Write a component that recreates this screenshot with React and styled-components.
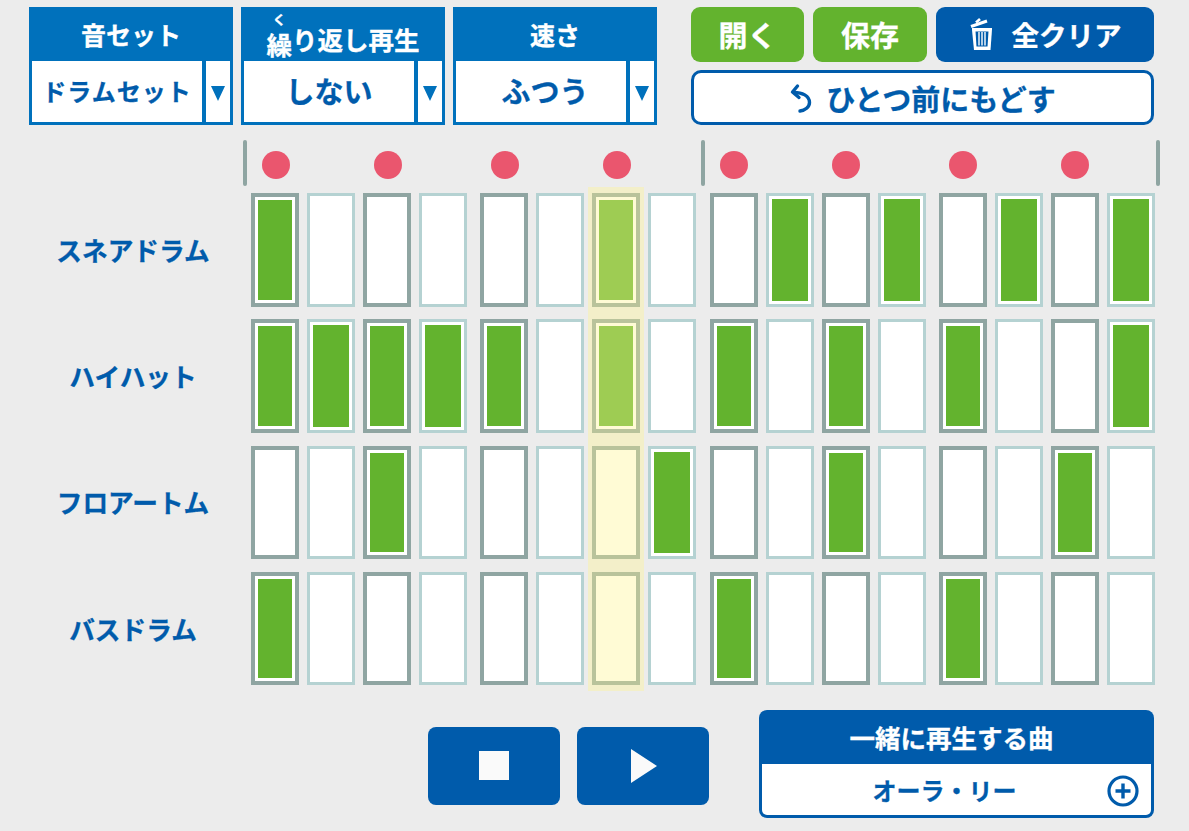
import React from "react";
import styled, { createGlobalStyle } from "styled-components";

const Global = createGlobalStyle`
  html, body { margin: 0; padding: 0; background: #ececec; }
  body {
    font-family: "Noto Sans CJK JP", "Noto Sans", sans-serif;
    font-weight: 700;
    -webkit-text-stroke: 0.3px currentColor;
  }
  * { box-sizing: border-box; }
`;

const Page = styled.div`
  position: relative;
  width: 1189px;
  height: 831px;
  padding: 7px 0 0 29px;
  overflow: hidden;
`;

const TopBar = styled.div`
  display: flex;
  gap: 8px;
  height: 118px;
`;

const SelectPanel = styled.div`
  width: 204px;
  height: 118px;
  display: flex;
  flex-direction: column;
  background: #0071bc;
  padding: 0 3px 3px;
`;

const SelectTitle = styled.div`
  height: 54px;
  display: flex;
  align-items: center;
  justify-content: center;
  color: #fff;
  font-size: ${(p) => (p.$ruby ? 25.5 : 25)}px;
  line-height: 30px;
  white-space: nowrap;
  padding-top: ${(p) => (p.$ruby ? "9px" : "0")};
  rt {
    font-size: 13px;
    line-height: 13px;
    position: relative;
    top: -6px;
  }
`;

const SelectBody = styled.div`
  flex: 1;
  display: flex;
  gap: 4px;
`;

const SelectValue = styled.div`
  width: 170px;
  background: #fff;
  color: #005bab;
  font-size: ${(p) => p.$size || 29}px;
  letter-spacing: ${(p) => p.$spacing || 0}px;
  padding: 0 0 3px ${(p) => p.$shift || 0}px;
  display: flex;
  align-items: center;
  justify-content: center;
  white-space: nowrap;
`;

const SelectArrow = styled.div`
  width: 24px;
  background: #fff;
  display: flex;
  align-items: center;
  justify-content: center;
  padding-top: 4px;
  &::after {
    content: "";
    border-left: 7px solid transparent;
    border-right: 7px solid transparent;
    border-top: 15px solid #0071bc;
  }
`;

const ActionGroup = styled.div`
  width: 463px;
  margin-left: 26px;
  display: flex;
  flex-direction: column;
  gap: 8px;
`;

const ActionRow = styled.div`
  display: flex;
  gap: 9px;
`;

const ActionButton = styled.div`
  width: ${(p) => p.$w}px;
  height: 55px;
  border-radius: 9px;
  background: ${(p) => (p.$blue ? "#005bab" : "#63b32e")};
  color: #fff;
  font-size: ${(p) => (p.$blue ? 27.5 : 29)}px;
  padding-bottom: 2px;
  display: flex;
  align-items: center;
  justify-content: center;
  gap: ${(p) => (p.$blue ? "17px" : "0")};
  white-space: nowrap;
`;

const UndoButton = styled.div`
  height: 55px;
  border-radius: 10px;
  border: 3px solid #005bab;
  background: #fff;
  color: #005bab;
  font-size: 29px;
  display: flex;
  align-items: center;
  justify-content: center;
  gap: 13px;
  white-space: nowrap;
`;

const BeatRow = styled.div`
  display: flex;
  height: 46px;
  margin: 15px 0 7px 214px;
  width: 917px;
`;

const Bar = styled.div`
  width: 4px;
  height: 46px;
  border-radius: 2px;
  background: #8fa5a2;
  margin-left: ${(p) => p.$ml || 0}px;
`;

const Dot = styled.div`
  width: 28px;
  height: 28px;
  margin: 11px 0 0 ${(p) => p.$ml}px;
  border-radius: 50%;
  background: #ea566e;
`;

const Grid = styled.div`
  display: flex;
  flex-direction: column;
  gap: 12.83px;
`;

const Track = styled.div`
  display: flex;
  height: 113.5px;
`;

const TrackLabel = styled.div`
  width: 208px;
  margin-right: 14px;
  padding-bottom: 1px;
  display: flex;
  align-items: center;
  justify-content: center;
  color: #005bab;
  font-size: 25.7px;
  white-space: nowrap;
`;

const Measure = styled.div`
  display: flex;
  gap: 8.5px;
  margin-left: ${(p) => p.$ml || 0}px;
`;

const Cell = styled.div`
  width: 47.5px;
  height: 113.5px;
  background: #fff;
  border: ${(p) => (p.$beat ? "4px solid #8fa5a2" : "3px solid #b5d2d2")};
  padding: 3px;
  &::after {
    content: "";
    display: ${(p) => (p.$on ? "block" : "none")};
    width: 100%;
    height: 100%;
    background: #63b32e;
  }
`;

const Playhead = styled.div`
  position: absolute;
  left: 588px;
  top: 187px;
  width: 56px;
  height: 504px;
  background: rgba(255, 245, 145, 0.38);
  pointer-events: none;
`;

const Transport = styled.div`
  display: flex;
  margin: 24.5px 0 0 399px;
`;

const TransportButton = styled.div`
  width: 132px;
  height: 78px;
  margin: 17px 17px 0 0;
  border-radius: 8px;
  background: #005bab;
  display: flex;
  align-items: center;
  justify-content: center;
`;

const StopGlyph = styled.div`
  width: 30px;
  height: 29px;
  background: #fafafa;
`;

const PlayIcon = styled.svg`
  margin-left: 2px;
`;

const SongPanel = styled.div`
  width: 395px;
  height: 108px;
  margin-left: 33px;
  border-radius: 8px;
  background: #005bab;
  padding: 0 3px 3px;
  display: flex;
  flex-direction: column;
`;

const SongTitle = styled.div`
  height: 54px;
  display: flex;
  align-items: center;
  justify-content: center;
  color: #fff;
  font-size: 25.5px;
  padding-right: 10px;
  white-space: nowrap;
`;

const SongBody = styled.div`
  position: relative;
  flex: 1;
  background: #fff;
  border-radius: 0 0 5px 5px;
  color: #005bab;
  font-size: 24px;
  display: flex;
  align-items: center;
  justify-content: center;
  padding-right: 24px;
`;

const PlusIcon = styled.svg`
  position: absolute;
  right: 12px;
  top: 11px;
`;

const TrashIcon = () => (
  <svg width="26" height="34" viewBox="0 0 26 34" fill="none">
    <path d="M2 9.5 L18 4" stroke="#fff" strokeWidth="3" />
    <path d="M7 5.5 L11 2" stroke="#fff" strokeWidth="2.6" />
    <path d="M3 11 H23 V12.5 L21.5 33 H5 L3 13 Z" fill="#fff" />
    <path d="M6.5 14.5 H19.5 L18.5 29.5 H7.5 Z" fill="#005bab" />
    <path d="M10 15 V28.5 M13 15 V28.5 M16 15 V28.5" stroke="#fff" strokeWidth="1.4" />
  </svg>
);

const UndoIcon = () => (
  <svg width="24" height="30" viewBox="0 0 24 30" fill="none">
    <path d="M8.5 3 L3.5 9 L10 14.5" stroke="#005bab" strokeWidth="3.4" strokeLinecap="round" strokeLinejoin="round" />
    <path d="M5 9.5 C13 9.5 20.5 12.5 20.5 19.5 C20.5 24 16 27.5 11 28" stroke="#005bab" strokeWidth="3.4" strokeLinecap="round" />
  </svg>
);

const rows = [
  { name: "スネアドラム", on: [0, 6, 9, 11, 13, 15] },
  { name: "ハイハット", on: [0, 1, 2, 3, 4, 6, 8, 10, 12, 15] },
  { name: "フロアートム", on: [2, 7, 10, 14] },
  { name: "バスドラム", on: [0, 8, 12] },
];

const measures = [
  { start: 0, ml: 0 },
  { start: 4, ml: 13.5 },
  { start: 8, ml: 14.5 },
  { start: 12, ml: 13.5 },
];

export default function App() {
  return (
    <Page>
      <Global />
      <TopBar>
        <SelectPanel>
          <SelectTitle>音セット</SelectTitle>
          <SelectBody>
            <SelectValue $size={24} $spacing={1}>ドラムセット</SelectValue>
            <SelectArrow />
          </SelectBody>
        </SelectPanel>
        <SelectPanel>
          <SelectTitle $ruby>
            <ruby>繰<rt>く</rt></ruby>り返し再生
          </SelectTitle>
          <SelectBody>
            <SelectValue>しない</SelectValue>
            <SelectArrow />
          </SelectBody>
        </SelectPanel>
        <SelectPanel>
          <SelectTitle>速さ</SelectTitle>
          <SelectBody>
            <SelectValue $shift={8}>ふつう</SelectValue>
            <SelectArrow />
          </SelectBody>
        </SelectPanel>
        <ActionGroup>
          <ActionRow>
            <ActionButton $w={113}>開く</ActionButton>
            <ActionButton $w={114}>保存</ActionButton>
            <ActionButton $w={218} $blue>
              <TrashIcon />
              全クリア
            </ActionButton>
          </ActionRow>
          <UndoButton>
            <UndoIcon />
            ひとつ前にもどす
          </UndoButton>
        </ActionGroup>
      </TopBar>

      <BeatRow>
        <Bar />
        <Dot $ml={15} />
        <Dot $ml={84} />
        <Dot $ml={89} />
        <Dot $ml={84} />
        <Bar $ml={70} />
        <Dot $ml={15} />
        <Dot $ml={84} />
        <Dot $ml={89} />
        <Dot $ml={84} />
        <Bar $ml={67} />
      </BeatRow>

      <Grid>
        {rows.map((row) => (
          <Track key={row.name}>
            <TrackLabel>{row.name}</TrackLabel>
            {measures.map((m) => (
              <Measure key={m.start} $ml={m.ml}>
                {[0, 1, 2, 3].map((i) => {
                  const idx = m.start + i;
                  return <Cell key={idx} $beat={idx % 2 === 0} $on={row.on.includes(idx)} />;
                })}
              </Measure>
            ))}
          </Track>
        ))}
      </Grid>

      <Playhead />

      <Transport>
        <TransportButton>
          <StopGlyph />
        </TransportButton>
        <TransportButton>
          <PlayIcon width="28" height="36" viewBox="0 0 28 36">
            <path d="M1 1 L27 18 L1 35 Z" fill="#fafafa" />
          </PlayIcon>
        </TransportButton>
        <SongPanel>
          <SongTitle>一緒に再生する曲</SongTitle>
          <SongBody>
            オーラ・リー
            <PlusIcon width="32" height="32" viewBox="0 0 32 32" fill="none">
              <circle cx="16" cy="16" r="14" stroke="#005bab" strokeWidth="3.2" />
              <path d="M16 8.5 V23.5 M8.5 16 H23.5" stroke="#005bab" strokeWidth="3.4" />
            </PlusIcon>
          </SongBody>
        </SongPanel>
      </Transport>
    </Page>
  );
}
